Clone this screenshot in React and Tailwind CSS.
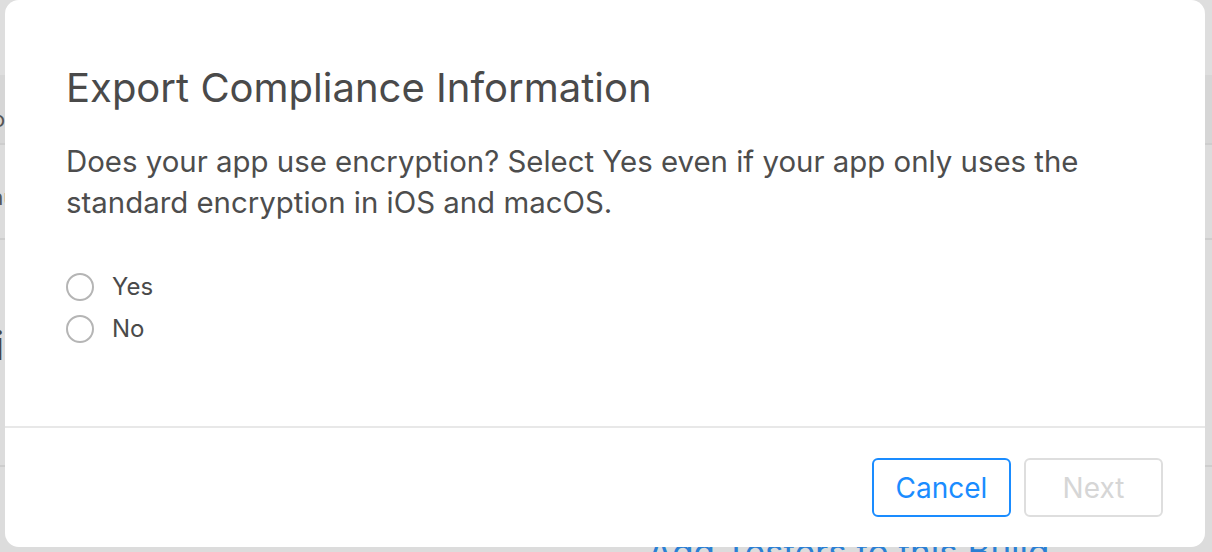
import React, { useState } from "react";

const font = { fontFamily: "Inter, 'Noto Sans', sans-serif" };

const ExportComplianceDialog = () => {
  const [choice, setChoice] = useState(null);

  return (
    <div className="absolute left-[5px] top-0 flex h-[547px] w-[1200px] flex-col rounded-[14px] bg-white">
      {/* Body */}
      <div className="flex-1 pl-[61px] pr-10 pt-[64px]">
        <h1 className="text-[40px] leading-[48px] text-[#4a4a4a]">
          Export Compliance Information
        </h1>
        <p className="mt-[29px] text-[29.4px] leading-[41px] text-[#4d4d4d]">
          Does your app use encryption? Select Yes even if your app only uses the
          <br />
          standard encryption in iOS and macOS.
        </p>

        <div className="mt-[50px] flex flex-col gap-[14px]">
          {["Yes", "No"].map((label) => (
            <label
              key={label}
              className="flex h-[28px] cursor-pointer items-center gap-[18px]"
              onClick={() => setChoice(label)}
            >
              <span className="flex h-[28px] w-[28px] items-center justify-center rounded-full border-2 border-[#b5b5b5]">
                {choice === label && (
                  <span className="h-[12px] w-[12px] rounded-full bg-[#1a8cff]" />
                )}
              </span>
              <span className="text-[24px] text-[#4a4a4a]">{label}</span>
            </label>
          ))}
        </div>
      </div>

      {/* Footer */}
      <div className="flex h-[121px] items-start justify-end gap-[13px] border-t-2 border-[#e8e8e8] pr-[42px] pt-[30px]">
        <button className="h-[59px] w-[139px] rounded-[6px] border-2 border-[#1a8cff] text-[28px] text-[#1a8cff]">
          Cancel
        </button>
        <button
          disabled={!choice}
          className="h-[59px] w-[139px] rounded-[6px] border-2 border-[#dedede] text-[28px] text-[#d6d6d6]"
        >
          Next
        </button>
      </div>
    </div>
  );
};

export default function App() {
  return (
    <div className="relative h-[552px] w-[1212px] overflow-hidden bg-[#dcdcdc]" style={font}>
      {/* Dimmed page behind the dialog */}
      <div className="flex flex-col">
        <div className="h-[75px] bg-[#dedede]" />
        <div className="flex h-[70px] items-start border-b-2 border-[#cdcdcd] bg-[#d6d6d6] pt-[28px]">
          <span className="-ml-[8px] text-[22px] text-[#555]">oc</span>
        </div>
        <div className="flex h-[95px] items-start border-b-2 border-[#cdcdcd] bg-[#dcdcdc] pt-[36px]">
          <span className="-ml-[9px] text-[22px] text-[#555]">au</span>
        </div>
        <div className="flex h-[227px] items-start border-b-2 border-[#cdcdcd] bg-[#dcdcdc] pt-[76px]">
          <span className="-ml-[6px] text-[40px] font-medium text-[#444]">i</span>
        </div>
        <div className="flex h-[85px] items-end bg-[#dcdcdc] pl-[648px]">
          <span className="-mb-[25px] text-[35px] text-[#2a7fd4]">Add Testers to this Build</span>
        </div>
      </div>

      <ExportComplianceDialog />
    </div>
  );
}
